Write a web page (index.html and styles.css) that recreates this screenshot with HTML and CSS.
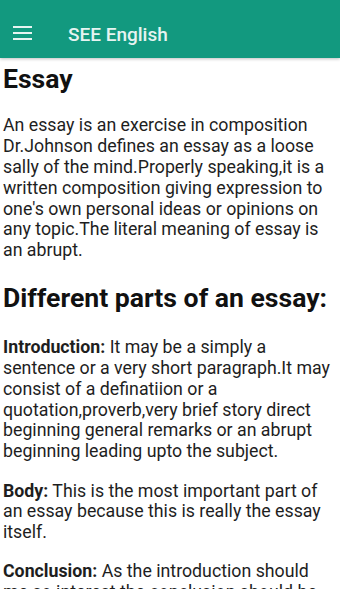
FILE: index.html
```html
<!DOCTYPE html>
<html>
<head>
<meta charset="utf-8">
<link rel="stylesheet" href="styles.css">
</head>
<body>
<header class="appbar">
  <svg class="menu" width="19" height="14" viewBox="0 0 19 14">
    <rect x="0" y="0" width="19" height="2" fill="#e6f4f1"/>
    <rect x="0" y="6" width="19" height="2" fill="#e6f4f1"/>
    <rect x="0" y="12" width="19" height="2" fill="#e6f4f1"/>
  </svg>
  <span class="title">SEE English</span>
</header>
<main class="content">
  <h1 class="h1">Essay</h1>
  <p class="para first">An essay is an exercise in composition Dr.Johnson defines an essay as a loose sally of the mind.Properly speaking,it is a written composition giving expression to one's own personal ideas or opinions on any topic.The literal meaning of essay is an abrupt.</p>
  <h2 class="h2">Different parts of an essay:</h2>
  <p class="para intro"><b>Introduction:</b> It may be a simply a sentence or a very short paragraph.It may consist of a definatiion or a quotation,proverb,very brief story direct beginning general remarks or an abrupt beginning leading upto the subject.</p>
  <p class="para"><b>Body:</b> This is the most important part of an essay because this is really the essay itself.</p>
  <p class="para"><b>Conclusion:</b> As the introduction should me so interest the conclusion should be</p>
</main>
</body>
</html>
```
FILE: styles.css
```css
html, body {
  margin: 0;
  padding: 0;
  background: #fff;
  overflow: hidden;
}
body {
  font-family: Roboto, "Liberation Sans", sans-serif;
  width: 340px;
  height: 589px;
}
.appbar {
  height: 58px;
  background: #12997f;
  display: flex;
  align-items: center;
  padding: 10px 0 0 13px;
  box-sizing: border-box;
  box-shadow: 0 1px 3px rgba(0,0,0,0.25);
  position: relative;
}
.menu {
  display: block;
  margin-top: -2px;
}
.title {
  margin-left: 36px;
  color: #e6f4f1;
  font-size: 19px;
  font-weight: 500;
}
.content {
  padding: 0 4px 0 3px;
}
.h1 {
  margin: 4.6px 0 0;
  font-size: 26.6px;
  line-height: 31.2px;
  font-weight: 700;
  color: #111;
}
.h2 {
  margin: 21px 0 0;
  font-size: 26.6px;
  line-height: 31.2px;
  font-weight: 700;
  color: #111;
}
.para {
  margin: 18.5px 0 0;
  font-size: 17.75px;
  line-height: 20.8px;
  color: #1e1e1e;
}
.para.first {
  margin-top: 21.7px;
}
.para.intro {
  margin-top: 24px;
}
.para b {
  font-weight: 700;
}
```
